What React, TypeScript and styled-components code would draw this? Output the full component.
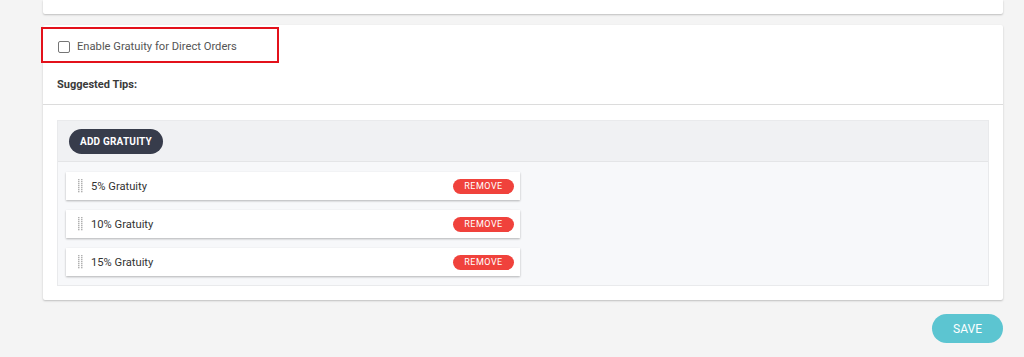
import React from 'react';
import styled, { createGlobalStyle } from 'styled-components';

const GlobalStyle = createGlobalStyle`
  body {
    margin: 0;
    background: #f4f4f4;
    font-family: Roboto, "Liberation Sans", Arial, sans-serif;
  }
`;

const tips = ['5% Gratuity', '10% Gratuity', '15% Gratuity'];

const DragHandle: React.FC = () => (
  <svg width="5" height="14" viewBox="0 0 5 14">
    {[0, 1, 2, 3, 4, 5, 6].map((r) =>
      [0, 3].map((c) => <rect key={`${r}-${c}`} x={c} y={r * 2} width="1.5" height="1.3" fill="#b0b0b0" />)
    )}
  </svg>
);

const App: React.FC = () => (
  <>
    <GlobalStyle />
    <Page>
      <TopCard />
      <Card>
        <Highlight>
          <Checkbox />
          <CheckLabel>Enable Gratuity for Direct Orders</CheckLabel>
        </Highlight>
        <SectionTitle>Suggested Tips:</SectionTitle>
        <Divider />
        <Panel>
          <PanelHeader>
            <DarkButton>ADD GRATUITY</DarkButton>
          </PanelHeader>
          <List>
            {tips.map((t) => (
              <Item key={t}>
                <DragHandle />
                <ItemLabel>{t}</ItemLabel>
                <RemoveButton>REMOVE</RemoveButton>
              </Item>
            ))}
          </List>
        </Panel>
      </Card>
      <Footer>
        <SaveButton>SAVE</SaveButton>
      </Footer>
    </Page>
  </>
);

// Styled Components
const Page = styled.div`
  display: flex;
  flex-direction: column;
  gap: 11px;
  padding: 0 21px 0 43px;
  height: 357px;
  box-sizing: border-box;
`;

const TopCard = styled.div`
  height: 14px;
  background: #fff;
  border-radius: 0 0 2px 2px;
  box-shadow: 0 1px 2px rgba(0, 0, 0, 0.22);
`;

const Card = styled.div`
  background: #fff;
  border-radius: 2px;
  box-shadow: 0 1px 2px rgba(0, 0, 0, 0.22);
  padding: 2px 0 14px;
`;

const Highlight = styled.label`
  display: flex;
  align-items: center;
  gap: 7px;
  box-sizing: border-box;
  width: 238px;
  height: 36px;
  margin-left: -2px;
  padding: 3px 0 0 15px;
  border: 2px solid #e3111b;
`;

const Checkbox = styled.span`
  width: 12px;
  height: 12px;
  box-sizing: border-box;
  border: 1.5px solid #757575;
  border-radius: 2px;
`;

const CheckLabel = styled.span`
  font-size: 11.2px;
  color: #555;
`;

const SectionTitle = styled.div`
  padding: 15px 14px 0;
  height: 26px;
  font-size: 11px;
  font-weight: 700;
  color: #3a3a3a;
`;

const Divider = styled.div`
  height: 1px;
  background: #dcdcdc;
  margin-bottom: 15px;
`;

const Panel = styled.div`
  margin: 0 14px;
  background: #f7f8fa;
  border: 1px solid #e9eaec;
`;

const PanelHeader = styled.div`
  display: flex;
  align-items: center;
  height: 40px;
  padding: 0 11px;
  background: #f0f1f3;
  border-bottom: 1px solid #e4e5e7;
`;

const DarkButton = styled.button`
  height: 25px;
  padding: 0 11px;
  border: none;
  border-radius: 13px;
  background: #373c4b;
  color: #fff;
  font-family: inherit;
  font-size: 10px;
  font-weight: 700;
  letter-spacing: 0.2px;
`;

const List = styled.div`
  display: flex;
  flex-direction: column;
  gap: 10px;
  padding: 10px 8px 9px;
`;

const Item = styled.div`
  display: flex;
  align-items: center;
  width: 454px;
  height: 28px;
  box-sizing: border-box;
  padding: 0 6px 0 12px;
  background: #fff;
  box-shadow: 0 1px 2px rgba(0, 0, 0, 0.28);
`;

const ItemLabel = styled.span`
  flex: 1;
  margin-left: 8px;
  font-size: 11.2px;
  color: #333;
`;

const RemoveButton = styled.button`
  width: 61px;
  height: 15px;
  padding: 0;
  border: none;
  border-radius: 8px;
  background: #f0423c;
  color: #fff;
  font-family: inherit;
  font-size: 9px;
  letter-spacing: 0.5px;
  line-height: 15px;
`;

const Footer = styled.div`
  display: flex;
  justify-content: flex-end;
  padding-top: 3px;
`;

const SaveButton = styled.button`
  width: 71px;
  height: 29px;
  border: none;
  border-radius: 15px;
  background: #5cc5d1;
  color: #fff;
  font-family: inherit;
  font-size: 12px;
`;

export default App;
